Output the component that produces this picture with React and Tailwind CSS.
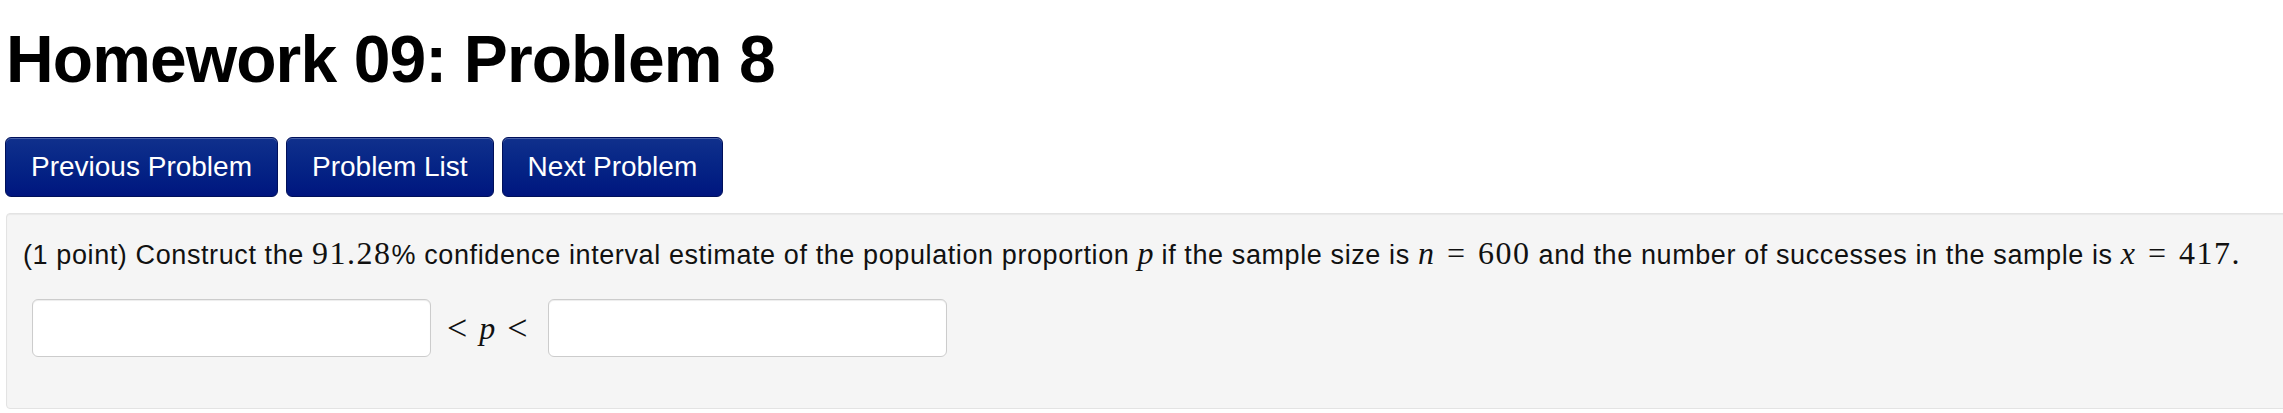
function MathVar({ children }) {
  return (
    <span className="font-['Liberation_Serif',serif] italic text-[32px] leading-none tracking-normal">
      {children}
    </span>
  );
}

function MathNum({ children }) {
  return (
    <span className="font-['Liberation_Serif',serif] text-[32px] leading-none tracking-[1.5px]">
      {children}
    </span>
  );
}

function MathEq() {
  return (
    <span className="font-['Liberation_Serif',serif] text-[32px] leading-none mx-[13px] tracking-normal">
      =
    </span>
  );
}

function NavButton({ label }) {
  return (
    <button className="h-[60px] px-[25px] flex items-center rounded-[6px] border border-[#00105a] bg-gradient-to-b from-[#10308c] to-[#00157f] shadow-[inset_0_1px_0_rgba(255,255,255,0.25)] text-white text-[28px] leading-none font-['Liberation_Sans',Arial,sans-serif]">
      {label}
    </button>
  );
}

export default function App() {
  return (
    <div className="w-full h-[413px] bg-white overflow-hidden font-['Liberation_Sans',Arial,sans-serif] text-black">
      <h1 className="pt-[26px] pl-[6px] text-[66px] tracking-[-0.9px] leading-none font-bold">
        Homework 09: Problem 8
      </h1>

      <div className="mt-[45px] pl-[5px] flex gap-[8px]">
        <NavButton label="Previous Problem" />
        <NavButton label="Problem List" />
        <NavButton label="Next Problem" />
      </div>

      <div className="mt-[16px] ml-[6px] mr-[-10px] h-[196px] bg-[#f5f5f5] border border-[#e3e3e3] rounded-[4px] shadow-[inset_0_1px_1px_rgba(0,0,0,0.05)] pl-[16px] pt-[23px]">
        <p className="text-[27px] tracking-[0.6px] leading-[30px] h-[30px] text-[#111] whitespace-nowrap">
          (1 point) Construct the <MathNum>91.28</MathNum>% confidence interval
          estimate of the population proportion <MathVar>p</MathVar> if the
          sample size is <MathVar>n</MathVar>
          <MathEq />
          <MathNum>600</MathNum> and the number of successes in the sample is{" "}
          <MathVar>x</MathVar>
          <MathEq />
          <MathNum>417.</MathNum>
        </p>

        <div className="mt-[32px] ml-[9px] flex items-center">
          <input
            type="text"
            className="w-[399px] h-[58px] bg-white border border-[#cccccc] rounded-[6px] shadow-[inset_0_1px_1px_rgba(0,0,0,0.075)] outline-none"
          />
          <span className="ml-[16px] mr-[20px] flex items-center gap-[12px] font-['Liberation_Serif',serif] text-[32px] leading-none text-[#111]">
            <span className="text-[36px]">&lt;</span>
            <i>p</i>
            <span className="text-[36px]">&lt;</span>
          </span>
          <input
            type="text"
            className="w-[399px] h-[58px] bg-white border border-[#cccccc] rounded-[6px] shadow-[inset_0_1px_1px_rgba(0,0,0,0.075)] outline-none"
          />
        </div>
      </div>
    </div>
  );
}
